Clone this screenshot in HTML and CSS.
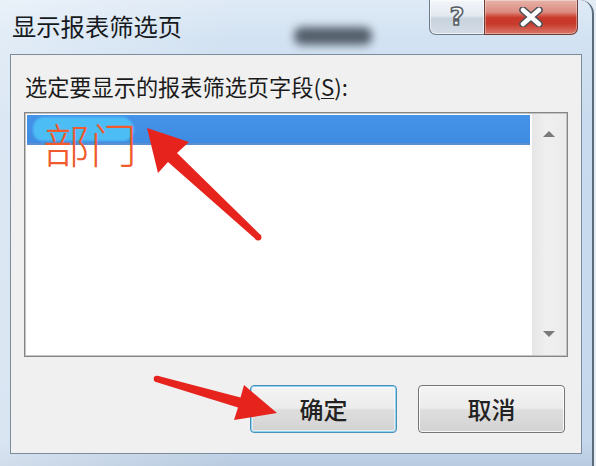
FILE: index.html
```html
<!DOCTYPE html>
<html lang="zh-CN">
<head>
<meta charset="utf-8">
<title>显示报表筛选页</title>
<link rel="stylesheet" href="styles.css">
</head>
<body>
<div class="window">
  <div class="titlebar">
    <h1 class="title">显示报表筛选页</h1>
    <span class="smudge"></span>
    <div class="caption">
      <button class="cap help"><span class="qmark">?</span></button>
      <button class="cap close">
        <svg width="26" height="20" viewBox="0 0 26 20">
          <path d="M5 3 L21 17 M21 3 L5 17" stroke="#4a4f57" stroke-width="7.5" stroke-linecap="round" fill="none"/>
          <path d="M5 3 L21 17 M21 3 L5 17" stroke="#ffffff" stroke-width="4.5" stroke-linecap="round" fill="none"/>
        </svg>
      </button>
    </div>
  </div>

  <div class="client">
    <label class="prompt">选定要显示的报表筛选页字段(<u>S</u>):</label>
    <div class="listbox">
      <div class="items">
        <div class="item selected">
          <span class="blob"></span>
          <span class="tag">部门</span>
        </div>
      </div>
      <div class="scrollbar">
        <span class="arrow up"></span>
        <span class="arrow down"></span>
      </div>
    </div>
    <div class="actions">
      <button class="btn default">确定</button>
      <button class="btn">取消</button>
    </div>
  </div>

  <svg class="marks" width="596" height="466" viewBox="0 0 596 466">
    <!-- pointer to the selected field -->
    <polygon fill="#e6241d" points="147,128 158,173 168,162 256,239.5 260.5,235 177,153 189,142"/>
    <circle fill="#e6241d" cx="258.2" cy="237.2" r="3.2"/>
    <!-- pointer to the OK button -->
    <polygon fill="#e6241d" points="277,413 244,385 240.5,397.5 157.5,375.8 156,382 238,407.5 234,420"/>
    <circle fill="#e6241d" cx="156.8" cy="378.9" r="3.1"/>
  </svg>
</div>
</body>
</html>
```

FILE: styles.css
```css
* {
  box-sizing: border-box;
}

html, body {
  margin: 0;
  padding: 0;
  background: #e3ecf5;
}

body {
  width: 596px;
  height: 466px;
  overflow: hidden;
  font-family: "Noto Sans CJK SC", "Noto Sans", sans-serif;
}

.window {
  position: relative;
  width: 594px;
  height: 466px;
  display: flex;
  flex-direction: column;
  border-right: 2px solid #5b6b7c;
  border-top-right-radius: 14px;
  background:
    linear-gradient(90deg, rgba(255,255,255,0.35) 0, rgba(255,255,255,0) 40%),
    linear-gradient(180deg, #dfeaf6 0, #d2e2f2 40px, #c9dbee 120px, #c6d8eb 440px, #b9cbe0 100%);
  overflow: hidden;
}

/* title bar */
.titlebar {
  height: 54px;
  flex: none;
  display: flex;
  align-items: flex-start;
}

.title {
  margin: 0;
  padding: 11px 0 0 12px;
  font-size: 24.3px;
  line-height: 30px;
  font-weight: 400;
  color: #151a20;
}

.smudge {
  position: absolute;
  left: 294px;
  top: 27px;
  width: 78px;
  height: 18px;
  border-radius: 8px;
  background: #3f4955;
  filter: blur(4px);
  opacity: 0.85;
}

.caption {
  margin-left: auto;
  margin-right: 14px;
  display: flex;
}

.cap {
  height: 35px;
  margin: 0;
  padding: 0;
  display: flex;
  align-items: center;
  justify-content: center;
  font: inherit;
}

.help {
  width: 55px;
  border: 1px solid #6d7b8b;
  border-top: none;
  border-right: none;
  border-bottom-left-radius: 7px;
  background: linear-gradient(180deg, #f3f6fa 0, #e4eaf1 45%, #c9d3de 55%, #d3dce6 100%);
  box-shadow: inset 0 0 0 1px rgba(255,255,255,0.6);
}

.qmark {
  font-family: "DejaVu Sans", sans-serif;
  font-weight: 700;
  font-size: 25px;
  line-height: 25px;
  color: #f4f6f8;
  -webkit-text-stroke: 1.6px #5a6068;
  margin-top: -2px;
}

.close {
  width: 94px;
  border: 1px solid #6e3d38;
  border-top: none;
  border-bottom-right-radius: 7px;
  background: linear-gradient(180deg, #e7b3a9 0, #dc8c80 35%, #c9392b 52%, #c73a2b 70%, #d9786a 100%);
  box-shadow: inset 0 0 0 1px rgba(255,255,255,0.35);
}

/* client area */
.client {
  margin-left: 10px;
  width: 572px;
  height: 400px;
  flex: none;
  border: 1px solid #7c8c9d;
  background: #f0f0f0;
  padding: 19px 14px 0 13px;
  display: flex;
  flex-direction: column;
}

.prompt {
  display: block;
  padding-left: 1px;
  font-size: 22.2px;
  line-height: 25px;
  color: #1b1b1b;
}

.prompt u {
  text-decoration-thickness: 1px;
  text-underline-offset: 2px;
}

.listbox {
  margin-top: 13px;
  width: 544px;
  height: 245px;
  border: 1px solid #858585;
  box-shadow: inset 0 0 0 1px #c4c4c4;
  background: #ffffff;
  display: flex;
  padding: 1px;
}

.items {
  flex: 1;
  padding: 1px 2px 0 1px;
}

.item {
  position: relative;
  height: 30px;
}

.selected {
  background: linear-gradient(180deg, #4593e8 0, #3e8be2 100%);
  box-shadow: inset 0 -2px 0 #5c8fd0;
}

.blob {
  position: absolute;
  left: 6px;
  top: 2px;
  width: 101px;
  height: 24px;
  border-radius: 12px 14px 12px 10px;
  background: #4dbdf6;
  filter: blur(1px);
}

.tag {
  position: absolute;
  left: 16px;
  top: -2px;
  font-size: 47px;
  line-height: 60px;
  font-weight: 300;
  color: #f05a2c;
  white-space: nowrap;
}

.scrollbar {
  width: 34px;
  flex: none;
  background: linear-gradient(90deg, #e6e6e6 0, #efefef 40%, #ececec 100%);
  display: flex;
  flex-direction: column;
  justify-content: space-between;
  align-items: center;
  padding: 17px 0 18px;
}

.arrow {
  width: 0;
  height: 0;
  border-left: 6px solid transparent;
  border-right: 6px solid transparent;
}

.up {
  border-bottom: 6px solid #7a7a7a;
}

.down {
  border-top: 6px solid #7a7a7a;
}

/* dialog buttons */
.actions {
  margin-top: 28px;
  display: flex;
  justify-content: flex-end;
  gap: 21px;
  padding-right: 2px;
}

.btn {
  width: 147px;
  height: 48px;
  margin: 0;
  border: 1px solid #757575;
  border-radius: 4px;
  background: linear-gradient(180deg, #f4f4f4 0, #ececec 48%, #dedede 52%, #d2d2d2 100%);
  box-shadow: inset 0 0 0 1px rgba(255,255,255,0.8);
  font-family: "Noto Sans CJK SC", sans-serif;
  font-size: 24px;
  font-weight: 500;
  color: #222222;
  padding: 0 0 2px;
}

.default {
  border-color: #4b90b9;
  box-shadow: inset 0 0 0 1px #8fd3f2, inset 0 0 0 2px rgba(255,255,255,0.5);
}

.marks {
  position: absolute;
  left: 0;
  top: 0;
  pointer-events: none;
}
```
